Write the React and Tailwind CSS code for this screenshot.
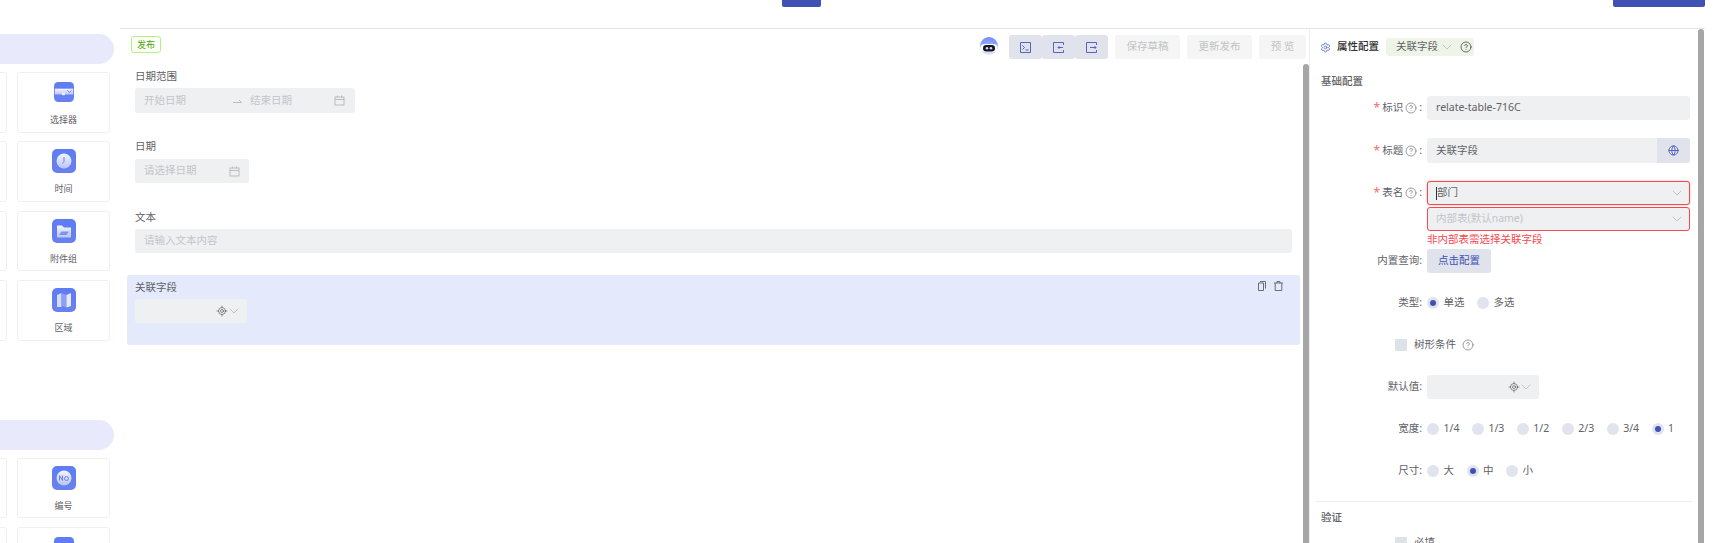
import React from "react";
import { ChevronDown, CircleHelp, Globe, LocateFixed, Settings } from "lucide-react";

const Chevron = ({ className = "" }) => <ChevronDown size={16} strokeWidth={1.1} className={`text-[#b0b3b9] shrink-0 ${className}`} />;
const Help = ({ c = "text-[#6f7175]" }) => <CircleHelp size={12} strokeWidth={1.4} className={`${c} shrink-0`} />;

const Calendar = () => (
  <svg width="11" height="11" viewBox="0 0 11 11" fill="none" stroke="#b9bcc2" strokeWidth="1" className="shrink-0">
    <rect x="1" y="2" width="9" height="8" />
    <path d="M1 4.5h9M3.5 .5v2M7.5 .5v2" />
  </svg>
);

const IconBox = ({ children, small }) => (
  <svg width={small ? 20 : 24} height={small ? 20 : 24} viewBox="0 0 24 24">
    <defs>
      <linearGradient id="ib" x1="0" y1="0" x2="0" y2="1">
        <stop offset="0" stopColor="#5f7cf5" />
        <stop offset="1" stopColor="#6a80ee" />
      </linearGradient>
      <linearGradient id="iw" x1="0" y1="0" x2="0" y2="1">
        <stop offset="0" stopColor="#f4f6ff" />
        <stop offset="1" stopColor="#b8c4f6" />
      </linearGradient>
    </defs>
    <rect width="24" height="24" rx="5" fill="url(#ib)" />
    {children}
  </svg>
);

const SelectorIcon = () => (
  <IconBox small>
    <rect x="1" y="8" width="22" height="7" fill="url(#iw)" />
    <path d="M9 13h4v3h-3z" fill="#eef1ff" />
    <path d="M16 10l2.5 2.5L21 10" fill="none" stroke="#6a80ee" strokeWidth="1.2" />
  </IconBox>
);
const ClockIcon = () => (
  <IconBox>
    <circle cx="12" cy="12" r="7.5" fill="url(#iw)" />
    <path d="M12 8v4.5l-1.5 2" fill="none" stroke="#6a80ee" strokeWidth="1" />
  </IconBox>
);
const FolderIcon = () => (
  <IconBox>
    <path d="M5 6.5h5l2 2h7v10H5z" fill="url(#iw)" />
    <path d="M7 16l2.5-3.5h7.5L14.5 16zM10 13h6" fill="#7d92f0" />
  </IconBox>
);
const MapIcon = () => (
  <IconBox>
    <path d="M5 7l4.5-2v14L5 19z" fill="#d4dbfb" />
    <path d="M9.5 5l5 2v12.5l-5-2z" fill="#8ea0f3" />
    <path d="M14.5 7L19 5v13l-4.5 1.5z" fill="#e6eaff" />
  </IconBox>
);
const NoIcon = () => (
  <IconBox>
    <circle cx="12" cy="12" r="7.5" fill="url(#iw)" />
    <path d="M7.5 14.5v-5l3 5v-5" fill="none" stroke="#6a80ee" strokeWidth="1" />
    <circle cx="14.5" cy="12.5" r="2" fill="none" stroke="#6a80ee" strokeWidth="1" />
  </IconBox>
);

const Card = ({ icon, label }) => (
  <div className="h-[60.7px] rounded-[3px] border border-[#f0f0f2] bg-white flex flex-col items-center pt-[7px]">
    <div className="h-[24px] flex items-center justify-center">{icon}</div>
    <div className="mt-[8px] h-[16px] leading-[16px] text-[9px] text-[#606266]">{label}</div>
  </div>
);

const Pill = ({ className = "" }) => <div className={`-ml-[40px] w-[154px] h-[30px] rounded-full bg-[#e8e9fb] ${className}`} />;

const Sidebar = () => (
  <div className="w-[120px] shrink-0 overflow-hidden pt-[6px]">
    <Pill />
    <div className="mt-[8px] -ml-[86px] w-[196px] grid grid-cols-[93px_93px] gap-x-[10px] gap-y-[8.6px]">
      <Card /><Card icon={<SelectorIcon />} label="选择器" />
      <Card /><Card icon={<ClockIcon />} label="时间" />
      <Card /><Card icon={<FolderIcon />} label="附件组" />
      <Card /><Card icon={<MapIcon />} label="区域" />
    </div>
    <Pill className="mt-[79px]" />
    <div className="mt-[8px] -ml-[86px] w-[196px] grid grid-cols-[93px_93px] gap-x-[10px] gap-y-[9px]">
      <Card /><Card icon={<NoIcon />} label="编号" />
      <Card /><Card icon={<SelectorIcon />} />
    </div>
  </div>
);

const Robot = () => (
  <svg width="18" height="18" viewBox="0 0 18 18" className="shrink-0">
    <defs>
      <linearGradient id="rb" x1="0" y1="0" x2="0" y2="1">
        <stop offset="0" stopColor="#6f8cf6" />
        <stop offset=".6" stopColor="#a9b8fa" />
        <stop offset="1" stopColor="#efe9ff" />
      </linearGradient>
    </defs>
    <circle cx="9" cy="9" r="9" fill="url(#rb)" />
    <path d="M2 3.5l3.5 2L2.5 8zM16 3.5l-3.5 2L15.5 8z" fill="#7f9af7" />
    <rect x=".5" y="7" width="17" height="8" rx="4" fill="#fff" />
    <rect x="3" y="8" width="12" height="6.5" rx="3.2" fill="#15151f" />
    <circle cx="7" cy="11.2" r="1.3" fill="#cfd8ff" />
    <circle cx="11" cy="11.2" r="1.3" fill="#cfd8ff" />
  </svg>
);

const ToolIcon = ({ d }) => (
  <svg width="11" height="11" viewBox="0 0 11 11" fill="none" stroke="#5565c0" strokeWidth="1">
    <path d={d} />
  </svg>
);

const ToolBtn = ({ d }) => (
  <div className="w-[33px] h-[24px] rounded-[3px] bg-[#e0e3ec] flex items-center justify-center">
    <ToolIcon d={d} />
  </div>
);

const GhostBtn = ({ children, w }) => (
  <div className={`${w} h-[24px] rounded-[3px] bg-[#f5f5f5] text-[#c2c3c5] text-[10.5px] flex items-center justify-center`}>{children}</div>
);

const Field = ({ label, labelMb = "mb-[4px]", pb = "pb-[22px]", children }) => (
  <div className={`px-[8px] pt-[4px] ${pb}`}>
    <div className={`h-[16px] leading-[16px] text-[#606266] ${labelMb}`}>{label}</div>
    {children}
  </div>
);

const Placeholder = ({ children, className = "" }) => <span className={`text-[#c2c5ca] ${className}`}>{children}</span>;

const Locate = () => <LocateFixed size={12} strokeWidth={1.3} className="text-[#55575c] shrink-0" />;

const Picker = () => (
  <div className="w-[112px] h-[24px] rounded-[3px] bg-[#eff0f2] flex items-center justify-end pr-[5px]">
    <Locate />
    <Chevron className="-ml-[2px]" />
  </div>
);

const Center = () => (
  <div className="w-[1190px] shrink-0 border-r border-[#eeeeee] flex flex-col">
    <div className="h-[35px] shrink-0 flex justify-between pl-[11px] pr-[3px]">
      <div className="mt-[7px] w-[30px] h-[17px] rounded-[3px] border border-[#b3ee87] bg-[#fbfff6] text-[#4fa50c] text-[9px] flex items-center justify-center">发布</div>
      <div className="mt-[6px] flex items-start">
        <div className="mt-[2px] mr-[11px]"><Robot /></div>
        <ToolBtn d="M.5 .5h10v10H.5zM2.5 3.5l2 2-2 2M5.5 8h3" />
        <ToolBtn d="M10.5 3V.5H.5v10h10V8M10 5.5H5M6.5 4L5 5.5 6.5 7" />
        <ToolBtn d="M10.5 3V.5H.5v10h10V8M4 5.5h6M8.5 4L10 5.5 8.5 7" />
        <div className="ml-[7px] flex gap-[7px]">
          <GhostBtn w="w-[65px]">保存草稿</GhostBtn>
          <GhostBtn w="w-[65px]">更新发布</GhostBtn>
          <GhostBtn w="w-[47px]">预 览</GhostBtn>
        </div>
      </div>
    </div>
    <div className="flex-1 min-h-0 flex">
      <div className="flex-1 min-w-0 pl-[7px] pr-[3px]">
        <Field label="日期范围" pb="pb-[21px]">
          <div className="w-[220px] h-[25px] rounded-[3px] bg-[#eff0f2] flex items-center pl-[9px] pr-[10px]">
            <Placeholder className="w-[89px]">开始日期</Placeholder>
            <svg width="9" height="5" viewBox="0 0 9 5" fill="none" stroke="#b9bcc2" strokeWidth="1" className="shrink-0"><path d="M0 4.5h8.5L6 2" /></svg>
            <Placeholder className="ml-[8px] flex-1">结束日期</Placeholder>
            <Calendar />
          </div>
        </Field>
        <Field label="日期" labelMb="mb-[5px]">
          <div className="w-[114px] h-[24px] rounded-[3px] bg-[#eff0f2] flex items-center justify-between pl-[9px] pr-[9px]">
            <Placeholder>请选择日期</Placeholder>
            <Calendar />
          </div>
        </Field>
        <Field label="文本">
          <div className="h-[24px] rounded-[3px] bg-[#eff0f2] flex items-center pl-[9px]">
            <Placeholder>请输入文本内容</Placeholder>
          </div>
        </Field>
        <div className="relative rounded-[3px] bg-[#e4e9fb]">
          <Field label="关联字段">
            <Picker />
          </Field>
          <div className="absolute right-[17px] top-[6px] flex gap-[8px]">
            <svg width="8" height="10" viewBox="0 0 8 10" fill="none" stroke="#6b6d72" strokeWidth="1"><path d="M2 .5h5.5v7M.5 2h5v7.5h-5z" /></svg>
            <svg width="9" height="10" viewBox="0 0 9 10" fill="none" stroke="#6b6d72" strokeWidth="1"><path d="M0 2h9M3 2V.5h3V2M1.2 2v7.5h6.6V2" /></svg>
          </div>
        </div>
      </div>
      <div className="w-[6px] shrink-0 rounded-t-[3px] bg-[#a6a6a6]" />
    </div>
  </div>
);

const Row = ({ star, help, label, children, h = "h-[24px]" }) => (
  <div className="flex items-start">
    <div className={`w-[112px] shrink-0 ${h} flex items-center justify-end text-[#606266]`}>
      {star && <span className="text-[#f56c6c] text-[12px] mr-[2px]">*</span>}
      <span>{label}</span>
      {help && <span className="ml-[2px] mr-[2px] flex"><Help /></span>}
      <span>:</span>
    </div>
    <div className="ml-[5px] flex-1 min-w-0">{children}</div>
  </div>
);

const Radio = ({ on, children }) => (
  <div className="flex items-center gap-[4.5px] text-[#606266]">
    <div className="w-[12px] h-[12px] rounded-full bg-[#e1e4ee] flex items-center justify-center">
      {on && <div className="w-[6px] h-[6px] rounded-full bg-[#3f51b5]" />}
    </div>
    <span>{children}</span>
  </div>
);

const Check = ({ children, help }) => (
  <div className="flex h-[24px] items-center pl-[85px] text-[#606266]">
    <div className="w-[12px] h-[12px] rounded-[1px] bg-[#dde2e8]" />
    <span className="ml-[7px]">{children}</span>
    {help && <span className="ml-[6px] flex"><Help /></span>}
  </div>
);

const Input = ({ children, className = "" }) => (
  <div className={`h-[24px] rounded-[3px] bg-[#eff0f2] flex items-center px-[9px] text-[#606266] ${className}`}>{children}</div>
);

const RightPanel = () => (
  <div className="w-[388px] shrink-0 pr-[8px] overflow-hidden">
    <div className="h-[18px] mt-[9px] flex items-center pl-[10px]">
      <Settings size={11} strokeWidth={1.6} className="text-[#4a5cc0]" />
      <span className="ml-[6px] font-medium text-[#303133]">属性配置</span>
      <div className="ml-[7px] w-[88px] h-[18px] rounded-[3px] bg-[#eef5e8] flex items-center pl-[10px] text-[#606266]">
        <span>关联字段</span>
        <Chevron className="ml-[1px]" />
        <span className="ml-[5px] flex"><Help c="text-[#303133]" /></span>
      </div>
    </div>
    <div className="mt-[17px] mb-[7px] h-[16px] leading-[16px] pl-[11px] font-medium text-[#606266]">基础配置</div>
    <div className="flex flex-col gap-[18px]">
      <Row star help label="标识"><Input>relate-table-716C</Input></Row>
      <Row star help label="标题" h="h-[25px]">
        <div className="h-[25px] rounded-[3px] bg-[#eff0f2] flex items-center justify-between pl-[9px] overflow-hidden text-[#606266]">
          <span>关联字段</span>
          <div className="w-[33px] h-[25px] bg-[#e0e3ec] flex items-center justify-center"><Globe size={11} strokeWidth={1.8} className="text-[#3f51b5]" /></div>
        </div>
      </Row>
      <div className="flex flex-col gap-[4px]">
        <Row star help label="表名">
          <div className="flex flex-col gap-[2px]">
            <Input className="border border-[#f5484f] justify-between pl-[8px] pr-[4px] shadow-[0_0_2px_#f9a0a4]">
              <span className="flex items-center"><span className="w-px h-[13px] bg-[#303133]" />部门</span>
              <Chevron />
            </Input>
            <Input className="border border-[#f5484f] justify-between pl-[8px] pr-[4px]">
              <Placeholder>内部表(默认name)</Placeholder>
              <Chevron />
            </Input>
            <div className="h-[12px] leading-[12px] text-[#f5484f]">非内部表需选择关联字段</div>
          </div>
        </Row>
        <Row label="内置查询">
          <div className="w-[64px] h-[24px] rounded-[3px] bg-[#e0e3ec] text-[#3f51b5] flex items-center justify-center">点击配置</div>
        </Row>
      </div>
      <Row label="类型">
        <div className="h-[24px] flex items-center gap-[12.5px]">
          <Radio on>单选</Radio>
          <Radio>多选</Radio>
        </div>
      </Row>
      <Check help>树形条件</Check>
      <Row label="默认值">
        <Picker />
      </Row>
      <Row label="宽度">
        <div className="h-[24px] flex items-center gap-[12.5px]">
          <Radio>1/4</Radio><Radio>1/3</Radio><Radio>1/2</Radio><Radio>2/3</Radio><Radio>3/4</Radio><Radio on>1</Radio>
        </div>
      </Row>
      <Row label="尺寸">
        <div className="h-[24px] flex items-center gap-[12.5px]">
          <Radio>大</Radio><Radio on>中</Radio><Radio>小</Radio>
        </div>
      </Row>
    </div>
    <div className="mt-[18px] ml-[6px] -mr-[2px] h-px bg-[#eeeeee]" />
    <div className="mt-[7px] mb-[6px] h-[16px] leading-[16px] pl-[11px] font-medium text-[#606266]">验证</div>
    <Check>必填</Check>
  </div>
);

export default function App() {
  return (
    <div className="w-[1716px] h-[543px] overflow-hidden bg-white flex flex-col text-[10.5px] font-['Noto_Sans','Noto_Sans_CJK_SC',sans-serif]">
      <div className="h-[28px] shrink-0 flex items-start">
        <div className="ml-[782px] w-[39px] h-[7px] rounded-b-[2px] bg-[#3f51b5]" />
        <div className="ml-auto mr-[11px] w-[92px] h-[7px] rounded-b-[2px] bg-[#3f51b5]" />
      </div>
      <div className="flex-1 min-h-0 flex">
        <Sidebar />
        <div className="w-[1585px] shrink-0 border-t border-[#e5e5e5] flex">
          <Center />
          <RightPanel />
          <div className="w-[6px] shrink-0 rounded-t-[3px] bg-[#a6a6a6]" />
        </div>
      </div>
    </div>
  );
}
